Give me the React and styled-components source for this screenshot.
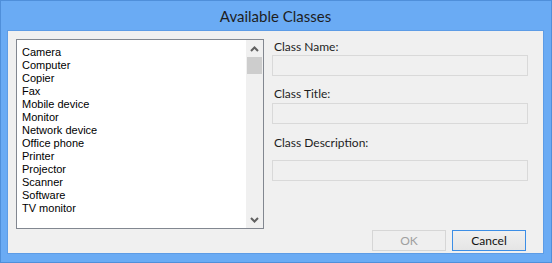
import React from 'react';
import styled, { createGlobalStyle } from 'styled-components';

const Global = createGlobalStyle`
	html, body {
		margin: 0;
		padding: 0;
		background: #ffffff;
	}
`

const Window = styled.div`
	width: 552px;
	height: 263px;
	box-sizing: border-box;
	border: 1px solid #4f8fda;
	background: #6aabf4;
	display: flex;
	flex-direction: column;
	padding: 0 7px 8px 6px;
`

const TitleBar = styled.div`
	height: 29px;
	display: flex;
	align-items: center;
	justify-content: center;
	font-family: Lato, "Liberation Sans", sans-serif;
	font-size: 15px;
	color: #1e1e1e;
	padding-top: 1px;
	box-sizing: border-box;
`

const Client = styled.div`
	flex: 1;
	background: #f0f0f0;
	border: 1px solid #5d9ce6;
	display: flex;
	padding: 8px 15px 0 8px;
	gap: 8px;
`

const ListBox = styled.div`
	width: 248px;
	height: 190px;
	box-sizing: border-box;
	border: 1px solid #828790;
	background: #ffffff;
	display: flex;
`

const Items = styled.ul`
	flex: 1;
	margin: 0;
	padding: 6px 0 0 5px;
	list-style: none;
	font-family: "Liberation Sans", Arial, sans-serif;
	font-size: 11px;
	color: #000;
`

const Item = styled.li`
	height: 13px;
	line-height: 13px;
	white-space: nowrap;
`

const ScrollBar = styled.div`
	width: 17px;
	background: #f0f0f0;
	display: flex;
	flex-direction: column;
	align-items: center;
`

const Arrow = styled.div`
	height: 17px;
	width: 17px;
	display: flex;
	align-items: center;
	justify-content: center;
`

const Thumb = styled.div`
	width: 15px;
	height: 17px;
	background: #cdcdcd;
`

const Track = styled.div`
	flex: 1;
`

const Side = styled.div`
	width: 256px;
	display: flex;
	flex-direction: column;
`

const Label = styled.div`
	font-family: Lato, "Liberation Sans", sans-serif;
	font-size: 12px;
	color: #1e1e1e;
	line-height: 16px;
	padding-left: 2px;
	margin-top: ${p => p.$top || 0}px;
	margin-bottom: ${p => p.$bottom || 0}px;
`

const Field = styled.div`
	height: 21px;
	box-sizing: border-box;
	border: 1px solid #d9d9d9;
	background: #f0f0f0;
`

const Buttons = styled.div`
	margin-top: auto;
	display: flex;
	justify-content: flex-end;
	gap: 6px;
	padding: 0 2px 2px 0;
`

const Button = styled.div`
	width: 74px;
	height: 21px;
	box-sizing: border-box;
	display: flex;
	align-items: center;
	justify-content: center;
	font-family: Lato, "Liberation Sans", sans-serif;
	font-size: 12px;
	border: 1px solid ${p => p.$primary ? '#3c8ee6' : '#d6d6d6'};
	color: ${p => p.$disabled ? '#a0a0a0' : '#111'};
	background: ${p => p.$disabled ? '#efefef' : 'linear-gradient(#f0f0f0, #e5e5e5)'};
`

const Chevron = ({ up }) => (
	<svg width="9" height="6" viewBox="0 0 9 6">
		<path
			d={up ? 'M1 5 L4.5 1.5 L8 5' : 'M1 1 L4.5 4.5 L8 1'}
			fill="none"
			stroke="#606060"
			strokeWidth="2"
		/>
	</svg>
)

const classes = [
	'Camera', 'Computer', 'Copier', 'Fax', 'Mobile device', 'Monitor',
	'Network device', 'Office phone', 'Printer', 'Projector', 'Scanner',
	'Software', 'TV monitor'
]

export default function App() {
	return (
		<>
			<Global />
			<Window>
				<TitleBar>Available Classes</TitleBar>
				<Client>
					<ListBox>
						<Items>
							{classes.map(c => <Item key={c}>{c}</Item>)}
						</Items>
						<ScrollBar>
							<Arrow><Chevron up /></Arrow>
							<Thumb />
							<Track />
							<Arrow><Chevron /></Arrow>
						</ScrollBar>
					</ListBox>
					<Side>
						<Label>Class Name:</Label>
						<Field />
						<Label $top={10} $bottom={1}>Class Title:</Label>
						<Field />
						<Label $top={11} $bottom={9}>Class Description:</Label>
						<Field />
						<Buttons>
							<Button $disabled>OK</Button>
							<Button $primary>Cancel</Button>
						</Buttons>
					</Side>
				</Client>
			</Window>
		</>
	);
}
